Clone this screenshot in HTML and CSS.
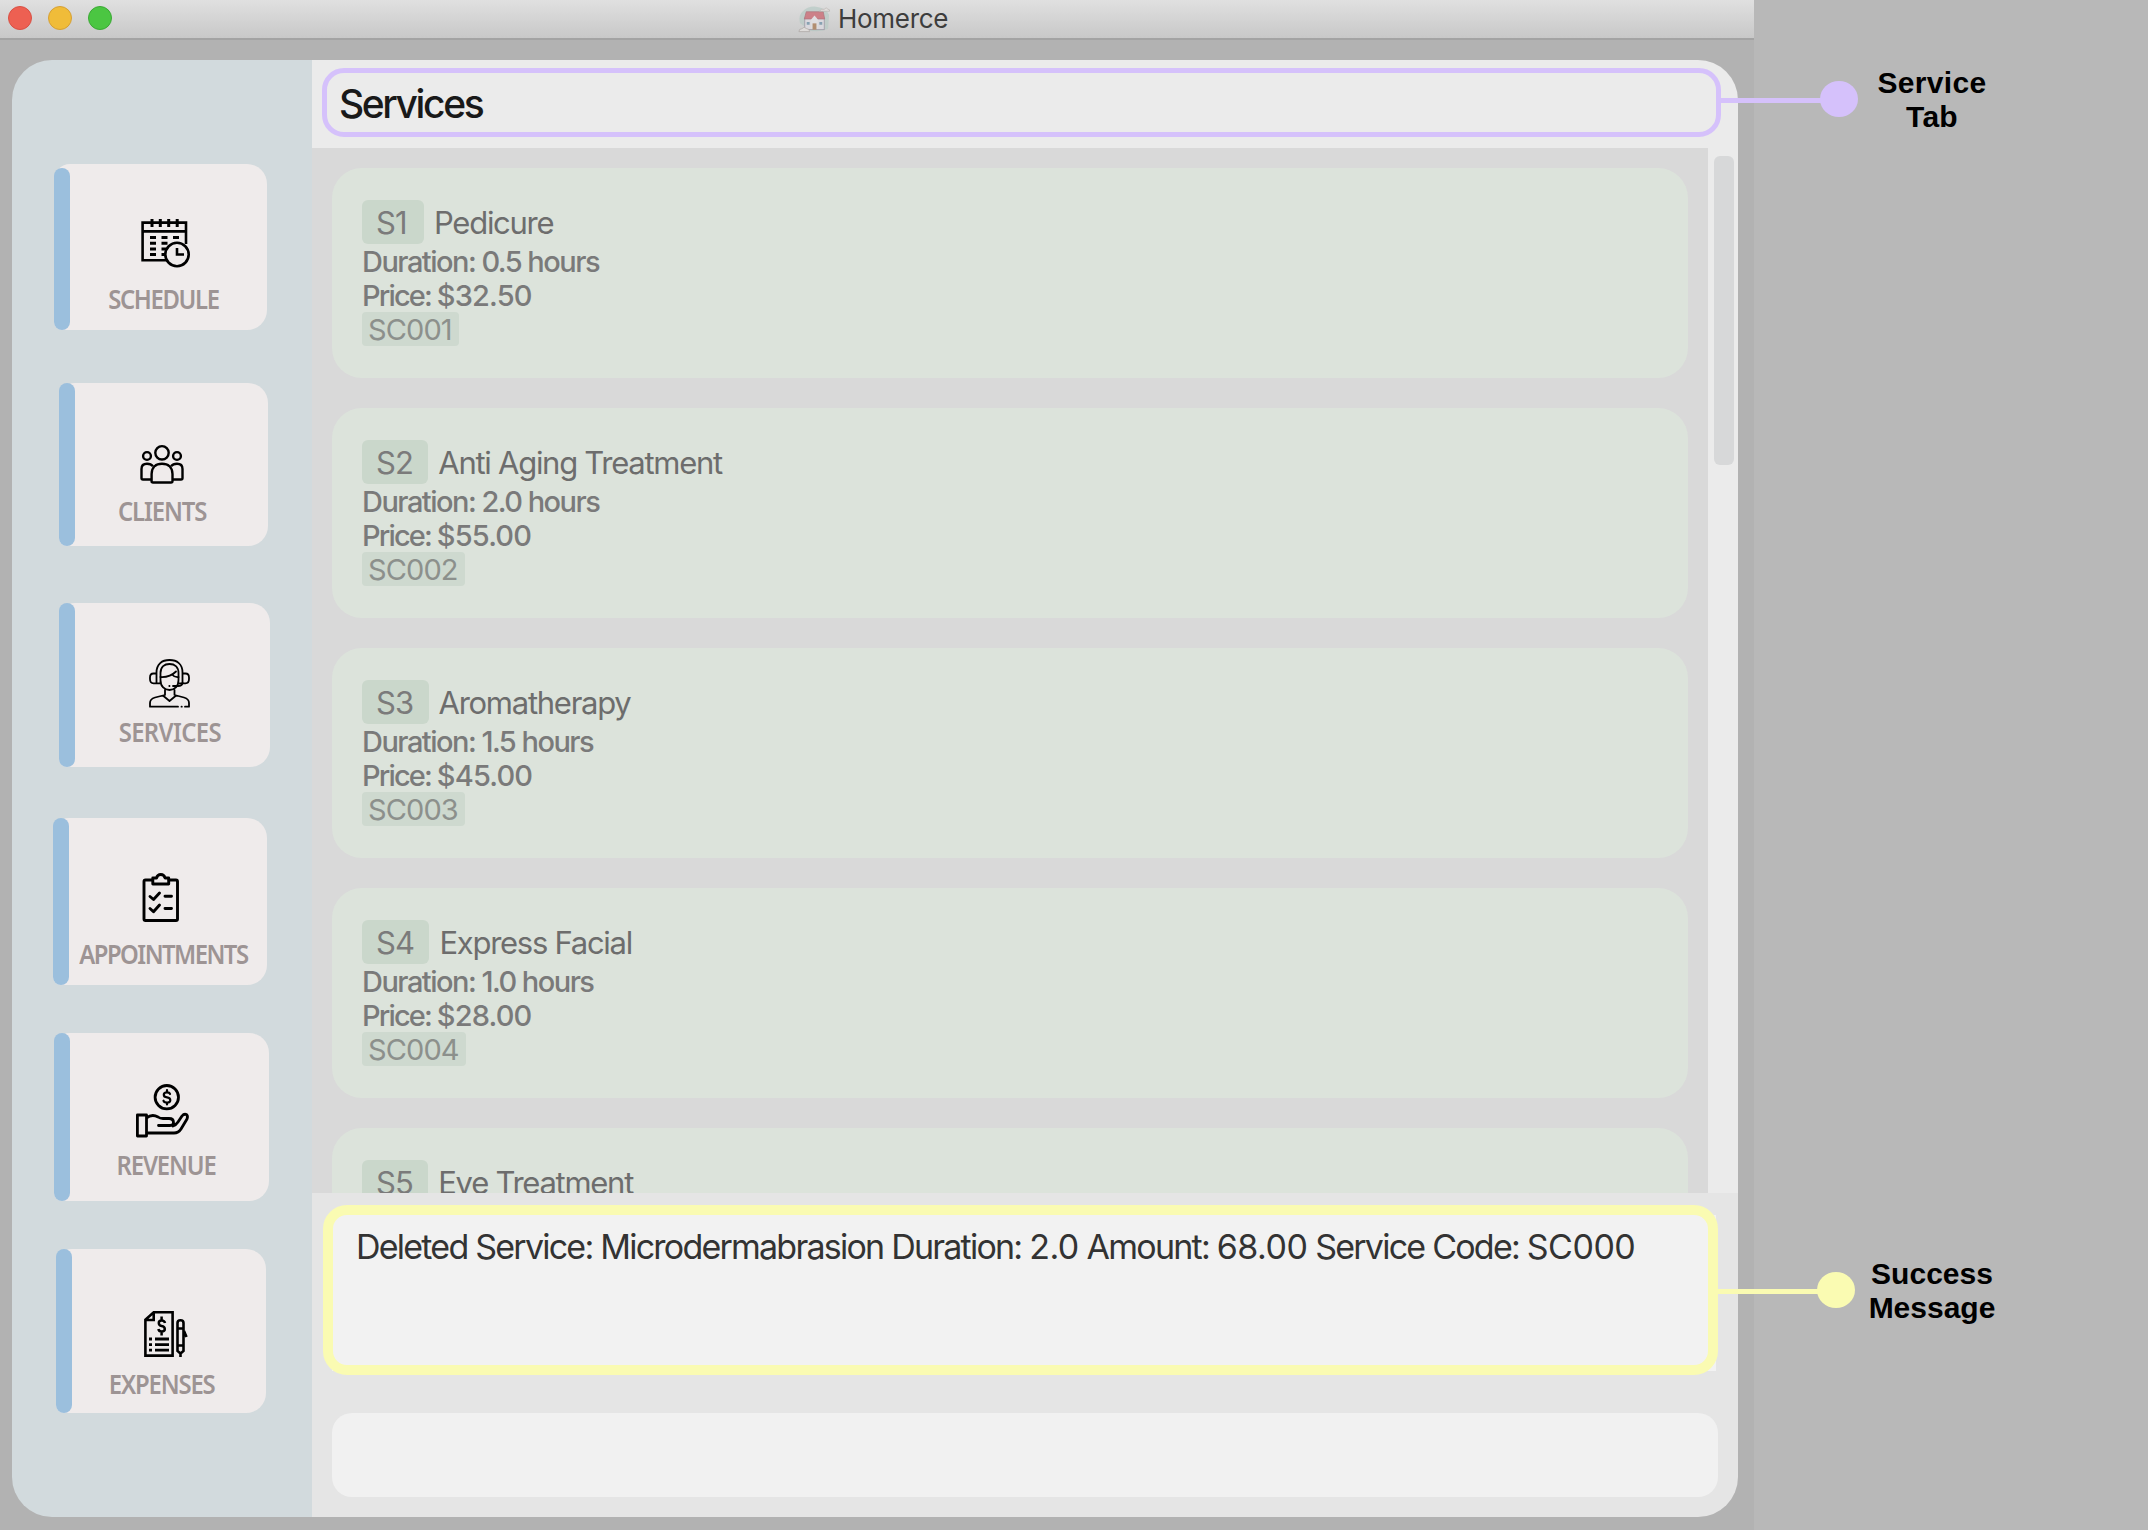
FILE: index.html
```html
<!DOCTYPE html>
<html lang="en">
<head>
<meta charset="utf-8">
<title>Homerce</title>
<link rel="stylesheet" href="styles.css">
</head>
<body>
<div class="window">
  <header class="titlebar">
    <div class="lights"><i class="light red"></i><i class="light yellow"></i><i class="light green"></i></div>
    <div class="title">
      <svg class="logo" viewBox="0 0 34 28">
        <path d="M5 6Q9 1 17 1Q29 2 32 10L31 24Q22 28 12 26L2 18Q0 10 5 6Z" fill="#b9cbc6"/>
        <rect x="7" y="13" width="20" height="12" fill="#dddbe2" stroke="#8a8494" stroke-width=".8"/>
        <path d="M8.500 6.500H26L27.500 14H6.500Z" fill="#c9646e" stroke="#9b5560" stroke-width=".7"/>
        <path d="M13.500 14.500L17 10.500L20.500 14.500V24H13.500Z" fill="#e4e2e6"/>
        <rect x="15" y="18.500" width="4" height="6.500" fill="#a87852"/>
        <path d="M9 17h3v3H9zM22 17h3v3h-3z" fill="#6f92a8"/>
        <path d="M1 27Q1 24 4 24Q6 21 9 24Q12 24 12 27Z" fill="#e4e1df" stroke="#a59d99" stroke-width=".8"/>
        <path d="M22 6Q24 3 27 4Q29 1 31 4Q33 4 32.500 6Z" fill="#e4e1df" stroke="#a59d99" stroke-width=".6"/>
      </svg>
      <span>Homerce</span>
    </div>
  </header>

  <div class="app">
    <nav class="sidebar">
      <a class="tile schedule">
        <svg class="icon" viewBox="0 0 49 48" fill="none" stroke="#000" stroke-width="2.600">
          <path d="M27 41.300H1.600V3.600H45V25M1.600 12.400H45"/>
          <path d="M11 0v8M19.300 0v8M27.700 0v8M36.200 0v8" stroke-width="3"/>
          <path d="M9 18.500h6M20.500 18.500h6M32 18.500h6M9 24.200h6M20.500 24.200h6M9 30h6M20.500 30h4.500M9 35.500h6M20.500 35.500h4" stroke-width="3"/>
          <circle cx="36" cy="35.500" r="11.700"/>
          <path d="M36 29v6.500h7"/>
        </svg>
        <span class="label">SCHEDULE</span>
      </a>
      <a class="tile clients">
        <svg class="icon" viewBox="0 0 44 39" fill="none" stroke="#000" stroke-width="2.400">
          <circle cx="22" cy="7.800" r="6.700"/><circle cx="7" cy="11" r="3.900"/><circle cx="37" cy="11" r="3.900"/>
          <path d="M11.600 37.500V29C11.600 22 16 18.800 22 18.800S32.500 22 32.500 29V36Q32.500 37.500 31 37.500H13Q11.600 37.500 11.600 36Z"/>
          <path d="M11.600 34.500H3Q1.500 34.500 1.500 33V24Q1.500 18.800 7 18.800Q11 18.800 13 21.300M32.500 34.500H41Q42.500 34.500 42.500 33V24Q42.500 18.800 37 18.800Q33 18.800 31 21.300"/>
        </svg>
        <span class="label">CLIENTS</span>
      </a>
      <a class="tile services">
        <svg class="icon" viewBox="0 0 41 49" fill="none" stroke="#000" stroke-width="1.800" stroke-linecap="round" stroke-linejoin="round">
          <path d="M7.500 24V13.500C7.500 5 13 1 20.500 1S33.500 5 33.500 13.500V24"/>
          <path d="M11.500 24V14C11.500 7.500 15.500 5 20.500 5S29.500 7.500 29.500 14V21C29.500 27.500 25.500 31 20.500 31S11.500 27.500 11.500 21"/>
          <path d="M11 24.300H4.500Q1 24.300 1 20V18.500Q1 14.500 4.500 14.500H7M30 24.300H36.500Q40 24.300 40 20V18.500Q40 14.500 36.500 14.500H34"/>
          <path d="M11.500 18Q21 18.500 27 12.500M23 15.500Q25.500 18.500 29.500 18M33.500 24Q33 27 29 27H24M20.300 27h.2"/>
          <path d="M16 31V36L6 38.500Q1 40 1 44V47.700H29M32.500 47.700h.3M36 47.700H40V44Q40 40 35 38.500L25.500 36V31M14.500 37L20.500 42L26.500 37"/>
        </svg>
        <span class="label">SERVICES</span>
      </a>
      <a class="tile appointments">
        <svg class="icon" viewBox="0 0 38 49" fill="none" stroke="#000" stroke-width="2.900" stroke-linecap="round" stroke-linejoin="round">
          <path d="M10.500 7H3.500Q2 7 2 8.500V46Q2 47.500 3.500 47.500H34Q35.500 47.500 35.500 46V8.500Q35.500 7 34 7H27"/>
          <path d="M10.800 11V5H14.500Q15.500 1.500 18.800 1.500T23 5H26.700V11Z"/>
          <path d="M8 23.500L11.500 26.500L17.500 20M23 23.200H29.500M8 35.500L11.500 38.700L17.500 32M23 35.500H29.500"/>
        </svg>
        <span class="label">APPOINTMENTS</span>
      </a>
      <a class="tile revenue">
        <svg class="icon" viewBox="0 0 53 54" fill="none" stroke="#000" stroke-width="2.800" stroke-linecap="round" stroke-linejoin="round">
          <circle cx="30.800" cy="13.200" r="11.700"/>
          <path d="M34 10Q33.500 8.300 31 8.300Q27.800 8.300 27.800 10.700T31 13.300Q34.300 13.700 34.300 16.200T31 18.500Q28 18.500 27.500 16.700M31 6V8M31 19V20.500" stroke-width="2.200"/>
          <path d="M1.400 31H10.500V52H1.400ZM10.500 34Q16 29.500 22 33Q24 34.500 27 34.500H33Q37.500 34.500 37.500 38.500Q37.500 41.500 34 41.500H22.500M37 42Q40 41 42 38L46 32Q48 29.500 50.500 30.500Q52.200 32 51 35L45 45Q42.500 49 38 49H11"/>
        </svg>
        <span class="label">REVENUE</span>
      </a>
      <a class="tile expenses">
        <svg class="icon" viewBox="0 0 44 46" fill="none" stroke="#000" stroke-width="2.600">
          <path d="M1.400 8.700L9.700 1.300H28.600V44.600H1.400ZM1.400 9H9.700V1.300"/>
          <path d="M5 28h3M11 28H25M5 33.600h3M11 33.600H25M5 39.200h3M11 39.200H25" stroke-width="2.800"/>
          <path d="M21 12Q20.500 9.500 17.600 9.500Q14.800 9.500 14.800 12T17.600 15Q20.800 15.500 20.800 18T17.600 20.500Q14.800 20.500 14.400 18M17.600 5.500V9M17.600 21V24.500" stroke-width="2.500"/>
          <path d="M33.500 40V12Q33.500 9.300 36.500 9.300T39.500 12V40L36.500 42.500ZM33.500 17.500h6M33.500 34.500h6M36.500 42V46M40 20L42.500 26" />
        </svg>
        <span class="label">EXPENSES</span>
      </a>
    </nav>

    <main class="main">
      <h1 class="tab-title"><span>Services</span></h1>
      <div class="list-area">
        <div class="list">
          <article class="card"><div class="head"><span class="index">S1</span><span class="name">Pedicure</span></div><p>Duration: 0.5 hours</p><p class="price">Price: <span class="num">$32.50</span></p><span class="code">SC001</span></article>
          <article class="card"><div class="head"><span class="index">S2</span><span class="name">Anti Aging Treatment</span></div><p>Duration: 2.0 hours</p><p class="price">Price: <span class="num">$55.00</span></p><span class="code">SC002</span></article>
          <article class="card"><div class="head"><span class="index">S3</span><span class="name">Aromatherapy</span></div><p>Duration: 1.5 hours</p><p class="price">Price: <span class="num">$45.00</span></p><span class="code">SC003</span></article>
          <article class="card"><div class="head"><span class="index">S4</span><span class="name">Express Facial</span></div><p>Duration: 1.0 hours</p><p class="price">Price: <span class="num">$28.00</span></p><span class="code">SC004</span></article>
          <article class="card"><div class="head"><span class="index">S5</span><span class="name">Eye Treatment</span></div></article>
        </div>
        <div class="scrollbar"><div class="thumb"></div></div>
      </div>
      <section class="footer">
        <div class="result">Deleted Service: Microdermabrasion Duration: <span class="value">2.0</span> Amount: <span class="value">68.00</span> Service Code: <span class="value">SC000</span></div>
        <div class="command"></div>
      </section>
    </main>
  </div>
</div>

<div class="outline outline-tab"></div>
<div class="outline outline-message"></div>
<div class="callout callout-tab"><i class="line"></i><i class="dot"></i><b>Service<br>Tab</b></div>
<div class="callout callout-message"><i class="line"></i><i class="dot"></i><b>Success<br>Message</b></div>
</body>
</html>
```
FILE: styles.css
```css
* { box-sizing: border-box; }
body {
  margin: 0;
  width: 2148px;
  height: 1530px;
  overflow: hidden;
  position: relative;
  background: #b8b8b8;
  font-family: Inter, "Liberation Sans", sans-serif;
}
.window {
  width: 1754px;
  height: 1530px;
  background: #b2b2b2;
}

/* Title bar */
.titlebar {
  height: 40px;
  display: grid;
  grid-template-columns: 798px 1fr;
  background: linear-gradient(#e0e0e0, #c8c8c8);
  border-bottom: 2px solid #a3a3a3;
}
.lights { display: flex; gap: 16px; padding: 6px 0 0 8px; }
.light { width: 24px; height: 24px; border-radius: 50%; border: 1px solid; }
.red { background: #ed6052; border-color: #d95044; }
.yellow { background: #f0bc39; border-color: #d6a035; }
.green { background: #4bc642; border-color: #3ba935; }
.title {
  display: flex;
  align-items: flex-start;
  gap: 7px;
  font-size: 26px;
  line-height: 38px;
  letter-spacing: -0.3px;
  color: #3d3d3d;
}
.logo { width: 33px; height: 30px; margin-top: 4px; opacity: 0.75; }

/* App shell */
.app {
  margin: 20px 0 0 12px;
  width: 1726px;
  height: 1457px;
  display: grid;
  grid-template-columns: 300px 1fr;
  border-radius: 40px;
  overflow: hidden;
}

/* Sidebar */
.sidebar { background: #d2dadd; display: flex; flex-direction: column; padding-top: 104px; }
.tile {
  display: flex;
  flex-direction: column;
  align-items: center;
  flex: none;
  position: relative;
  border-radius: 16px 20px 20px 8px;
  background: #efebeb;
}
.tile::before {
  content: "";
  position: absolute;
  left: 0;
  top: 0;
  bottom: 0;
  width: 16px;
  border-radius: 8px;
  background: #9bbfdd;
}
.icon { display: block; overflow: visible; flex: none; }
.label {
  font: 600 26.5px/31px "Noto Sans", sans-serif;
  color: #9d9494;
  white-space: nowrap;
  transform: scaleX(0.9);
}
.schedule { margin-left: 42px; width: 213px; height: 166px; padding: 55px 0 0 10px; }
.schedule::before { top: 4px; }
.schedule .icon { width: 49px; height: 48px; }
.schedule .label { margin: 17px 0 0 -5px; letter-spacing: -1.500px; }
.clients { margin: 53px 0 0 47px; width: 209px; height: 163px; padding: 62px 3px 0 0; }
.clients .icon { width: 44px; height: 39px; }
.clients .label { margin: 12px 0 0 0; letter-spacing: -1.200px; }
.services { margin: 57px 0 0 47px; width: 211px; height: 164px; padding: 56px 0 0 10px; }
.services .icon { width: 41px; height: 49px; }
.services .label { margin: 9px 0 0 1px; letter-spacing: -0.700px; }
.appointments { margin: 51px 0 0 41px; width: 214px; height: 167px; padding: 55px 0 0 1px; }
.appointments .icon { width: 38px; height: 49px; }
.appointments .label { margin: 17px 0 0 5px; letter-spacing: -1.700px; }
.revenue { margin: 48px 0 0 42px; width: 215px; height: 168px; padding: 51px 0 0 2px; }
.revenue .icon { width: 53px; height: 54px; }
.revenue .label { margin: 12px 0 0 8px; letter-spacing: -1.250px; }
.expenses { margin: 48px 0 0 44px; width: 210px; height: 164px; padding: 62px 0 0 10px; }
.expenses .icon { width: 44px; height: 46px; }
.expenses .label { margin: 12px 0 0 -8px; letter-spacing: -1.300px; }

/* Main column */
.main { display: grid; grid-template-rows: 88px 1045px 1fr; min-width: 0; }
.tab-title {
  margin: 0;
  padding-left: 27px;
  background: #ebebeb;
  color: #191919;
  font-size: 39px;
  font-weight: 500;
  line-height: 88px;
  letter-spacing: -2.400px;
}
.list-area { display: grid; grid-template-columns: 1396px 30px; overflow: hidden; min-height: 0; }
.list {
  padding: 20px;
  display: flex;
  flex-direction: column;
  gap: 30px;
  background: #d9d9d9;
  min-height: 0;
  overflow: hidden;
}
.card {
  flex: none;
  height: 210px;
  padding: 32px 30px 0;
  border-radius: 30px;
  background: #dce3db;
  color: #7a7a7a;
  font-size: 29px;
  font-weight: 500;
  line-height: 36px;
  letter-spacing: -1.520px;
}
.card p { margin: 0; height: 34px; }
.card .price { letter-spacing: -1.850px; }
.card .num { letter-spacing: -0.850px; }
.head { display: flex; gap: 10px; height: 44px; font-size: 31px; font-weight: 400; line-height: 46px; letter-spacing: -1.270px; }
.index { min-width: 62px; padding: 0 15.5px 0 14px; border-radius: 6px; background: #cad7cb; color: #7b7b7b; letter-spacing: -1px; }
.name { color: #6d6d6d; }
.code {
  display: inline-block;
  height: 34px;
  padding: 0 7px 0 6px;
  border-radius: 4px;
  background: #ced9cf;
  color: #8c908c;
  font-weight: 400;
  letter-spacing: -0.900px;
}
.scrollbar { padding: 8px 4px 0 6px; background: #ebebeb; }
.thumb { height: 309px; border-radius: 6px; background: #d7d8d9; }

/* Result display and command box */
.footer { padding: 22px 20px 0; background: #e5e5e5; }
.result {
  width: 1384px;
  height: 156px;
  padding: 11px 24px;
  background: #f2f2f2;
  color: #333;
  font-size: 34px;
  line-height: 42px;
  letter-spacing: -1.770px;
  white-space: nowrap;
}
.value { letter-spacing: -0.500px; }
.command { margin-top: 42px; height: 84px; border-radius: 20px; background: #f1f1f1; }

/* Annotations laid over the window */
.outline { position: absolute; }
.outline-tab { left: 322px; top: 68px; width: 1399px; height: 69px; border: 5px solid #d5c1fb; border-radius: 22px; }
.outline-message { left: 323px; top: 1205px; width: 1395px; height: 170px; border: 10px solid #fafbb2; border-radius: 24px; }
.callout { position: absolute; display: flex; align-items: center; }
.callout .line { width: 102px; height: 5px; margin-top: 2px; background: currentColor; }
.callout .dot { width: 38px; height: 36px; margin-left: -2px; border-radius: 50%; background: currentColor; }
.callout b { width: 146px; padding-top: 2px; color: #000; font: bold 30px/34px "Liberation Sans", sans-serif; text-align: center; letter-spacing: 0.300px; }
.callout-tab { left: 1720px; top: 64px; color: #d5c1fb; }
.callout-tab b { margin-left: 1px; }
.callout-message { left: 1717px; top: 1255px; color: #fafbb2; }
.callout-message b { margin-left: 4px; letter-spacing: 0; }
```
